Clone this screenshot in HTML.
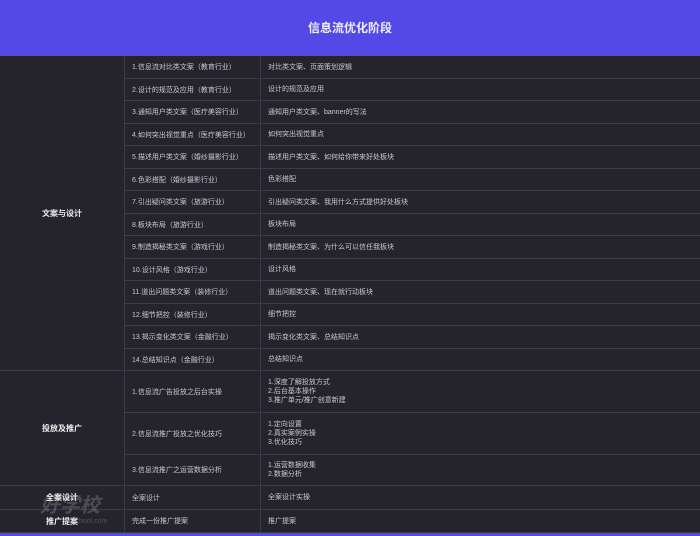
<!DOCTYPE html><html><head><meta charset="utf-8"><style>
*{margin:0;padding:0;box-sizing:border-box}
body{width:700px;height:536px;background:#25242d;font-family:"Liberation Sans","Noto Sans CJK SC",sans-serif;color:#c9c9d2;position:relative;overflow:hidden}
.h{position:absolute;left:0;top:0;width:700px;height:56px;background:#5449e6;color:#eef;font-size:12px;font-weight:bold;text-align:center;line-height:56px;padding-left:0}
.r{position:absolute;left:0;width:700px;font-size:7px}
.r div{position:absolute;top:0;height:100%;display:flex;align-items:center}
.a{left:0;width:124px;justify-content:center;color:#eee;font-size:8px;font-weight:bold}
.b{left:124px;width:136px;padding-left:7px;border-left:1px solid #3c3b48;border-bottom:1px solid #3c3b48}
.c{left:260px;width:440px;padding-left:7px;border-left:1px solid #3c3b48;border-bottom:1px solid #3c3b48;line-height:9px}
.g{position:absolute;left:0;width:124px;border-bottom:1px solid #3c3b48;display:flex;align-items:center;justify-content:center;color:#eee;font-size:8px;font-weight:bold}
</style></head><body>
<div class="h">信息流优化阶段</div>
<div class="g" style="top:56px;height:315px">文案与设计</div>
<div class="g" style="top:371px;height:115px">投放及推广</div>
<div class="g" style="top:486px;height:24px">全案设计</div>
<div class="g" style="top:510px;height:23px">推广提案</div>
<div class="r" style="top:56px;height:23px"><div class="b">1.信息流对比类文案（教育行业）</div><div class="c">对比类文案、页面策划逻辑</div></div>
<div class="r" style="top:79px;height:22px"><div class="b">2.设计的规范及应用（教育行业）</div><div class="c">设计的规范及应用</div></div>
<div class="r" style="top:101px;height:23px"><div class="b">3.通知用户类文案（医疗美容行业）</div><div class="c">通知用户类文案、banner的写法</div></div>
<div class="r" style="top:124px;height:22px"><div class="b">4.如何突出视觉重点（医疗美容行业）</div><div class="c">如何突出视觉重点</div></div>
<div class="r" style="top:146px;height:23px"><div class="b">5.描述用户类文案（婚纱摄影行业）</div><div class="c">描述用户类文案、如何给你带来好处板块</div></div>
<div class="r" style="top:169px;height:22px"><div class="b">6.色彩搭配（婚纱摄影行业）</div><div class="c">色彩搭配</div></div>
<div class="r" style="top:191px;height:23px"><div class="b">7.引出疑问类文案（旅游行业）</div><div class="c">引出疑问类文案、我用什么方式提供好处板块</div></div>
<div class="r" style="top:214px;height:22px"><div class="b">8.板块布局（旅游行业）</div><div class="c">板块布局</div></div>
<div class="r" style="top:236px;height:23px"><div class="b">9.制造揭秘类文案（游戏行业）</div><div class="c">制造揭秘类文案、为什么可以信任我板块</div></div>
<div class="r" style="top:259px;height:22px"><div class="b">10.设计风格（游戏行业）</div><div class="c">设计风格</div></div>
<div class="r" style="top:281px;height:23px"><div class="b">11.道出问题类文案（装修行业）</div><div class="c">道出问题类文案、现在就行动板块</div></div>
<div class="r" style="top:304px;height:22px"><div class="b">12.细节把控（装修行业）</div><div class="c">细节把控</div></div>
<div class="r" style="top:326px;height:23px"><div class="b">13.揭示变化类文案（金融行业）</div><div class="c">揭示变化类文案、总结知识点</div></div>
<div class="r" style="top:349px;height:22px"><div class="b">14.总结知识点（金融行业）</div><div class="c">总结知识点</div></div>
<div class="r" style="top:371px;height:42px"><div class="b">1.信息流广告投放之后台实操</div><div class="c">1.深度了解投放方式<br>2.后台基本操作<br>3.推广单元/推广创意新建</div></div>
<div class="r" style="top:413px;height:42px"><div class="b">2.信息流推广投放之优化技巧</div><div class="c">1.定向设置<br>2.真实案例实操<br>3.优化技巧</div></div>
<div class="r" style="top:455px;height:31px"><div class="b">3.信息流推广之运营数据分析</div><div class="c">1.运营数据收集<br>2.数据分析</div></div>
<div class="r" style="top:486px;height:24px"><div class="b">全案设计</div><div class="c">全案设计实操</div></div>
<div class="r" style="top:510px;height:23px"><div class="b">完成一份推广提案</div><div class="c">推广提案</div></div>
<div style="position:absolute;left:0;top:533px;width:700px;height:3px;background:#5449e6"></div>
<div style="position:absolute;left:40px;top:489px;font-size:20px;font-weight:bold;font-style:italic;color:rgba(255,255,255,0.18)">好学校</div>
<div style="position:absolute;left:72px;top:518px;font-size:7px;color:rgba(255,255,255,0.2)">school.com</div>
</body></html>
